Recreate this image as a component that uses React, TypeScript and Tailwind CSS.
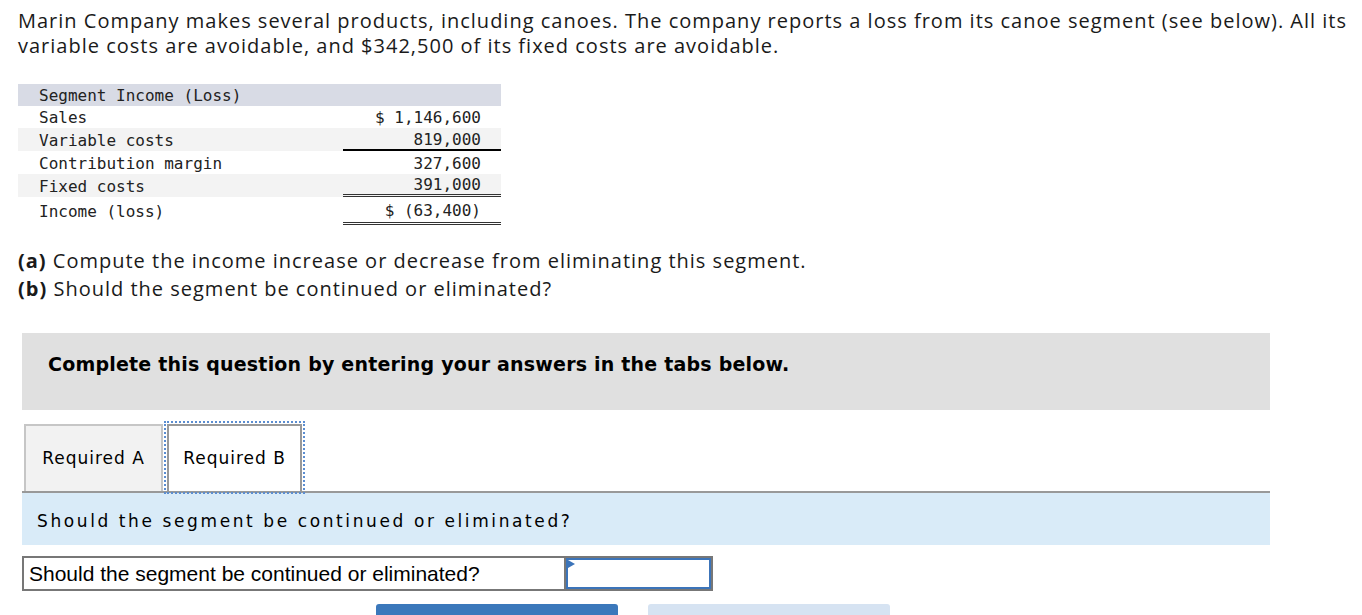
import React from "react";

const ROWS = [
  { label: "Sales", value: "$ 1,146,600", shade: false, line: "", h: "h-[22px]" },
  { label: "Variable costs", value: "819,000", shade: true, line: "single", h: "h-[23px]" },
  { label: "Contribution margin", value: "327,600", shade: false, line: "", h: "h-[23px]" },
  { label: "Fixed costs", value: "391,000", shade: true, line: "double", h: "h-[23px]" },
  { label: "Income (loss)", value: "$ (63,400)", shade: false, line: "double", h: "h-[28px]" },
];

function SegmentTable() {
  return (
    <div className="ml-[18px] w-[483px] font-['DejaVu_Sans_Mono',monospace] text-[16px] text-[#222]">
      <div className="flex h-[22px] items-center bg-[#d8dbe5] pl-[21px] pt-[2px]">Segment Income (Loss)</div>
      {ROWS.map((r) => (
        <div key={r.label} className={`flex ${r.h} ${r.shade ? "bg-[#f3f3f3]" : ""}`}>
          <div className="flex w-[325px] items-center pl-[21px] pt-[2px]">{r.label}</div>
          <div
            className={`flex w-[158px] items-center justify-end pr-[20px] pt-[2px] ${
              r.line === "single"
                ? "border-b-2 border-black"
                : r.line === "double"
                ? "border-b-[3px] border-double border-[#333]"
                : ""
            }`}
          >
            {r.value}
          </div>
        </div>
      ))}
    </div>
  );
}

export default function App() {
  return (
    <div className="min-h-screen bg-white text-[#1a1a1a] font-['Open_Sans',Arial,sans-serif]">
      <p className="pl-[18px] pr-[8px] pt-[8px] text-[20px] leading-[25px] tracking-[1px]">
        Marin Company makes several products, including canoes. The company reports a loss from its canoe segment (see below). All its
        <br />
        variable costs are avoidable, and $342,500 of its fixed costs are avoidable.
      </p>

      <div className="mt-[26px]">
        <SegmentTable />
      </div>

      <div className="mt-[22px] pl-[18px] text-[20px] leading-[28px] tracking-[1px]">
        <p>
          <b>(a)</b> Compute the income increase or decrease from eliminating this segment.
        </p>
        <p>
          <b>(b)</b> Should the segment be continued or eliminated?
        </p>
      </div>

      <div className="ml-[22px] w-[1248px]">
        <div className="mt-[30px] flex h-[77px] items-center bg-[#e0e0e0] pb-[14px] pl-[26px]">
          <span className="font-['DejaVu_Sans',Verdana,sans-serif] text-[19px] font-bold tracking-[0.2px] text-black">
            Complete this question by entering your answers in the tabs below.
          </span>
        </div>

        <div className="mt-[14px] flex h-[69px] items-end border-b-2 border-[#999] pl-[2px] font-['DejaVu_Sans',Verdana,sans-serif] text-[17px] tracking-[1px] text-black">
          <button className="flex h-[67px] w-[139px] items-center justify-center border-2 border-b-0 border-[#c6c6c6] bg-[#f2f2f2]">
            Required A
          </button>
          <button className="ml-[4px] flex h-[67px] w-[135px] items-center justify-center border-2 border-b-0 border-[#999] bg-white outline-2 outline-offset-1 outline-dotted outline-[#5b8dd0]">
            Required B
          </button>
        </div>

        <div className="flex h-[52px] items-center bg-[#d9ebf8] pl-[15px] pt-[6px] font-['DejaVu_Sans',Verdana,sans-serif] text-[17px] tracking-[2.6px] text-black">
          Should the segment be continued or eliminated?
        </div>

        <div className="mt-[11px] flex h-[35px] w-[691px] border-2 border-[#777]">
          <div className="flex w-[542px] items-center border-r-2 border-[#777] pl-[5px] font-['Liberation_Sans',Arial,sans-serif] text-[21px] text-black">
            Should the segment be continued or eliminated?
          </div>
          <div className="relative flex-1 border-2 border-[#3c74b9] bg-white">
            <svg className="absolute left-0 top-0" width="8" height="9" viewBox="0 0 8 9">
              <polygon points="0,0 7,4 0,8" fill="#3c74b9" />
            </svg>
          </div>
        </div>

        <div className="mt-[13px] flex gap-[30px] pl-[354px]">
          <div className="h-[20px] w-[242px] rounded-t-[3px] bg-[#3b78bb]" />
          <div className="h-[20px] w-[242px] rounded-t-[3px] bg-[#d6e3f2]" />
        </div>
      </div>
    </div>
  );
}
